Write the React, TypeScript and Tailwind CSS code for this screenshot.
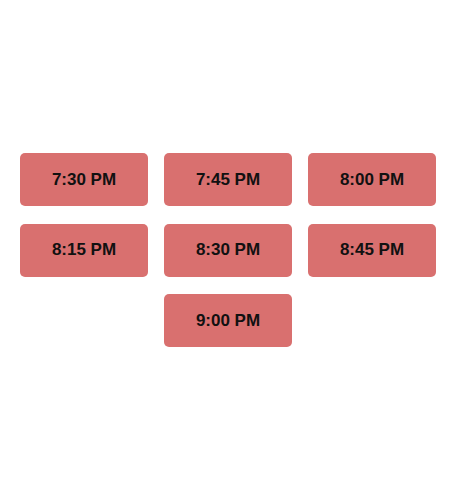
const times = ['7:30 PM', '7:45 PM', '8:00 PM', '8:15 PM', '8:30 PM', '8:45 PM', '9:00 PM']

export default function App() {
  return (
    <div className="h-[500px] w-[450px] bg-white flex items-center">
      <div className="ml-[20px] w-[416px] flex flex-wrap justify-center gap-x-4 gap-y-[17.5px]">
        {times.map((t) => (
          <button
            key={t}
            className="w-[128px] h-[53px] rounded-[5px] bg-[#d9706f] text-[17px] font-bold text-[#111] font-['Liberation_Sans',Arial,sans-serif]"
          >
            {t}
          </button>
        ))}
      </div>
    </div>
  )
}
